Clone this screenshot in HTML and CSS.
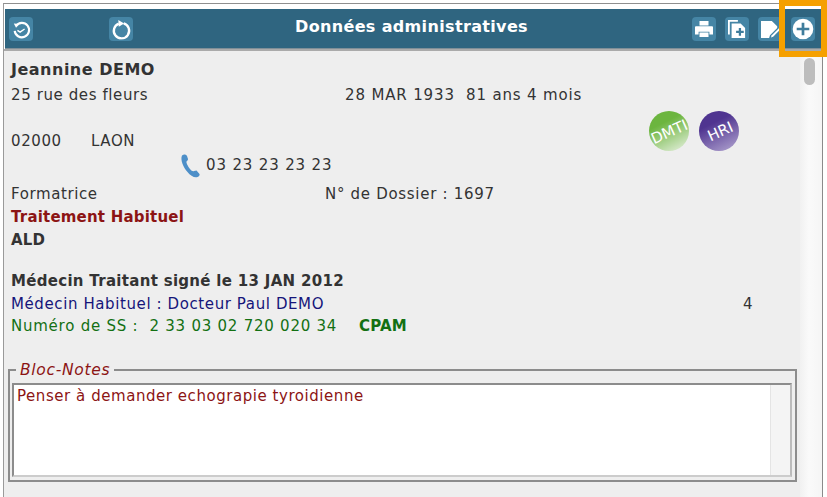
FILE: index.html
```html
<!DOCTYPE html>
<html lang="fr">
<head>
<meta charset="utf-8">
<title>Données administratives</title>
<link rel="stylesheet" href="styles.css">
</head>
<body>
<div class="window">
  <header class="header">
    <div class="tools-left">
      <span class="tool"><svg viewBox="0 0 24 24" width="24" height="24"><path d="M6.500 8.500A8 8 0 1 1 5 14" fill="none" stroke="#fff" stroke-width="2.400"/><path d="M4 6l6 .5-3.500 4z" fill="#fff"/><path d="M8 13.500l3 2 5-3.500" fill="none" stroke="#fff" stroke-width="1.500"/></svg></span>
      <span class="tool"><svg viewBox="0 0 24 24" width="24" height="24"><path d="M9.500 6A8.500 8.500 0 1 0 15 5.800" fill="none" stroke="#fff" stroke-width="2.600"/><path d="M9 2l6.500 4-6 3.500z" fill="#fff"/></svg></span>
    </div>
    <h1 class="title">Données administratives</h1>
    <div class="tools-right">
      <span class="tool"><svg viewBox="0 0 24 24" width="24" height="24"><path d="M7 3h10v5H7z" fill="#fff"/><path d="M3 9h18a1 1 0 0 1 1 1v8h-4v-3H6v3H2v-8a1 1 0 0 1 1-1z" fill="#fff"/><path d="M7 16h10v5H7z" fill="#fff"/></svg></span>
      <span class="tool"><svg viewBox="0 0 24 24" width="24" height="24"><path d="M2 2h11v2H4v14H2z" fill="#fff"/><path d="M6 6h10l5 5v11H6z" fill="#fff"/><path d="M11 14h3v-3h2.500v3h3v2.500h-3v3H14v-3h-3z" fill="#3f7d9c"/></svg></span>
      <span class="tool"><svg viewBox="0 0 24 24" width="24" height="24"><path d="M2 3h12l6 6v2l-8 8-1 3H2z" fill="#fff"/><path d="M14 19l9-9 1.500 1.500-9 9-2.500 1z" fill="#fff"/></svg></span>
      <span class="tool"><svg viewBox="0 0 24 24" width="24" height="24"><circle cx="12" cy="12" r="11.500" fill="#fff"/><path d="M10.500 5h3v5.500H19v3h-5.500V19h-3v-5.500H5v-3h5.500z" fill="#3f7d9c"/></svg></span>
    </div>
  </header>
  <div class="body">
    <main class="content">
      <div class="row name"><strong>Jeannine DEMO</strong></div>
      <div class="row address"><span class="col-a">25 rue des fleurs</span><span class="birth">28 MAR 1933&nbsp; 81 ans 4 mois</span></div>
      <div class="row city">
        <span class="zip">02000</span><span class="town">LAON</span>
        <span class="badges">
          <svg class="badge" viewBox="0 0 40 40" width="40" height="40"><defs><linearGradient id="g1" x1="0.2" y1="0" x2="0.7" y2="1"><stop offset="0.3" stop-color="#6cb53f"/><stop offset="1" stop-color="#d7e9cb"/></linearGradient></defs><circle cx="20" cy="20" r="20" fill="url(#g1)"/><text x="20" y="26" text-anchor="middle" class="badge-text" transform="rotate(-24 20 20)">DMTI</text></svg>
          <svg class="badge" viewBox="0 0 40 40" width="40" height="40"><defs><linearGradient id="g2" x1="0.2" y1="0" x2="0.7" y2="1"><stop offset="0.3" stop-color="#4f3490"/><stop offset="1" stop-color="#a596c8"/></linearGradient></defs><circle cx="20" cy="20" r="20" fill="url(#g2)"/><text x="21" y="26" text-anchor="middle" class="badge-text" transform="rotate(-24 20 20)">HRI</text></svg>
        </span>
      </div>
      <div class="row phone">
        <svg class="phone-icon" viewBox="0 0 22 26" width="22" height="26"><path d="M3 2.500c2-1.500 4-1 5 .5l1 3c.2 1-1 2-1.500 2.500-.5 1 1.500 5 3.500 7.500 1.500 2 3 2.500 4 2l2.500-.5 3 3.500c.5 1-.5 2.500-2 3-3 1-7-1-10-5C4.500 14.500 1 7 3 2.500z" fill="#4d8fc8"/></svg>
        <span class="phone-num">03 23 23 23 23</span>
      </div>
      <div class="row job"><span class="col-b">Formatrice</span><span class="file-num">N° de Dossier : 1697</span></div>
      <div class="row treat"><strong>Traitement Habituel</strong></div>
      <div class="row ald"><strong>ALD</strong></div>
      <div class="row mt"><strong>Médecin Traitant signé le 13 JAN 2012</strong></div>
      <div class="row doctor"><span class="doc-name">Médecin Habituel : Docteur Paul DEMO</span><span class="count">4</span></div>
      <div class="row ss"><span class="ss-num">Numéro de SS :&nbsp; 2 33 03 02 720 020 34</span><strong>CPAM</strong></div>
      <fieldset class="notes">
        <legend>Bloc-Notes</legend>
        <div class="notes-box">
          <div class="notes-text">Penser à demander echograpie tyroidienne</div>
          <div class="notes-scroll"></div>
        </div>
      </fieldset>
    </main>
    <aside class="scrollbar"><div class="thumb"></div></aside>
  </div>
</div>
<div class="highlight"></div>
</body>
</html>
```
FILE: styles.css
```css
* { box-sizing: border-box; }
html, body { margin: 0; height: 100%; background: #fff; overflow: hidden; }
body {
  padding: 3px 4px 0 3px;
  font-family: "DejaVu Sans", sans-serif;
  font-size: 15px;
  letter-spacing: 0.6px;
  color: #333;
}
strong { letter-spacing: 0.2px; }
.window {
  height: 494px;
  display: flex;
  flex-direction: column;
  border-top: 1px solid #8f8f8f;
  border-left: 1px solid #9a9a9a;
  border-right: 1px solid #8a8a8a;
  padding-top: 5px;
  background: #fff;
}
.header {
  height: 40px;
  flex: none;
  display: flex;
  align-items: center;
  justify-content: space-between;
  background: #2f6580;
  padding: 0 5px 0 4px;
  border-bottom: 1px solid #7f8f98;
  position: relative;
  margin-left: 1px;
}
.title {
  position: absolute;
  left: 0; right: 0;
  top: 8px;
  margin: 0;
  text-align: center;
  font-size: 16px;
  letter-spacing: 0.35px;
  line-height: 20px;
  font-weight: bold;
  color: #fff;
  transform: translateX(-2px);
}
.tools-left { display: flex; gap: 76px; }
.tools-right { display: flex; gap: 9px; padding-right: 2px; }
.tool {
  width: 24px; height: 24px;
  background: #4585a5;
  border-radius: 4px;
  display: flex;
  align-items: center;
  justify-content: center;
  overflow: hidden;
}
.tool svg { display: block; transform: scale(.9); }
.body {
  flex: 1;
  display: flex;
  min-height: 0;
  border-top: 2px solid #aaa;
}
.content {
  flex: 1;
  background: #eee;
  padding: 6px 0 0 7px;
  min-width: 0;
}
.row { display: flex; align-items: center; height: 23px; white-space: nowrap; }
.name { height: 24px; font-size: 16px; margin-bottom: 2px; }
.name strong { letter-spacing: 0.5px; }
.col-a { width: 334px; }
.birth { letter-spacing: 0.85px; }
.col-b { width: 314px; }
.file-num { letter-spacing: 0.7px; }
.city { margin-top: 23px; position: relative; }
.zip { width: 80px; }
.town { flex: 1; }
.badges {
  position: absolute;
  left: 638px; top: -18px;
  display: flex; gap: 10px;
}
.badge { display: block; }
.badge-text { font-family: "DejaVu Sans", sans-serif; font-size: 15px; letter-spacing: 0; fill: #fff; }
.phone { padding-left: 168px; gap: 5px; height: 25px; }
.phone-num { letter-spacing: 0.85px; }
.phone-icon { display: block; margin-top: 3px; }
.job { margin-top: 5px; height: 23px; }
.treat { color: #8c1414; }
.ald { margin-bottom: 18px; }
.mt { height: 23px; }
.mt strong { letter-spacing: 0.3px; }
.doctor { color: #15157a; }
.doc-name { width: 732px; }
.count { color: #333; }
.ss { color: #137013; height: 22px; }
.ss-num { width: 348px; letter-spacing: 0.76px; }
.notes {
  margin: 25px 0 0 -3px;
  width: 789px;
  height: 120px;
  padding: 0 3px 3px 2px;
  border: 2px solid #8c8c8c;
  min-inline-size: 0;
}
.notes legend {
  margin-left: 4px;
  padding: 0 4px;
  font-style: italic;
  font-size: 15.5px;
  letter-spacing: 0.7px;
  line-height: 16px;
  color: #8c1414;
}
.notes-box {
  height: 94px;
  margin-top: 5px;
  display: flex;
  background: #fff;
  border: 2px solid #8c8c8c;
  border-right-color: #bbb;
  border-bottom-color: #ccc;
}
.notes-text { flex: 1; padding: 2px 3px; color: #8c1414; white-space: nowrap; letter-spacing: 0.55px; }
.notes-scroll { width: 20px; background: #f4f4f4; border-left: 1px solid #e4e4e4; }
.scrollbar {
  width: 22px;
  flex: none;
  background: linear-gradient(to right, #f1f1f1, #fafafa 40%, #f5f5f5);
  padding: 7px 0 0 4px;
}
.thumb { width: 11px; height: 27px; border-radius: 6px; background: #bdbdbd; }
.highlight {
  position: absolute;
  left: 779px; top: 0;
  width: 48px; height: 57px;
  border: 6px solid #f5a000;
}
```
